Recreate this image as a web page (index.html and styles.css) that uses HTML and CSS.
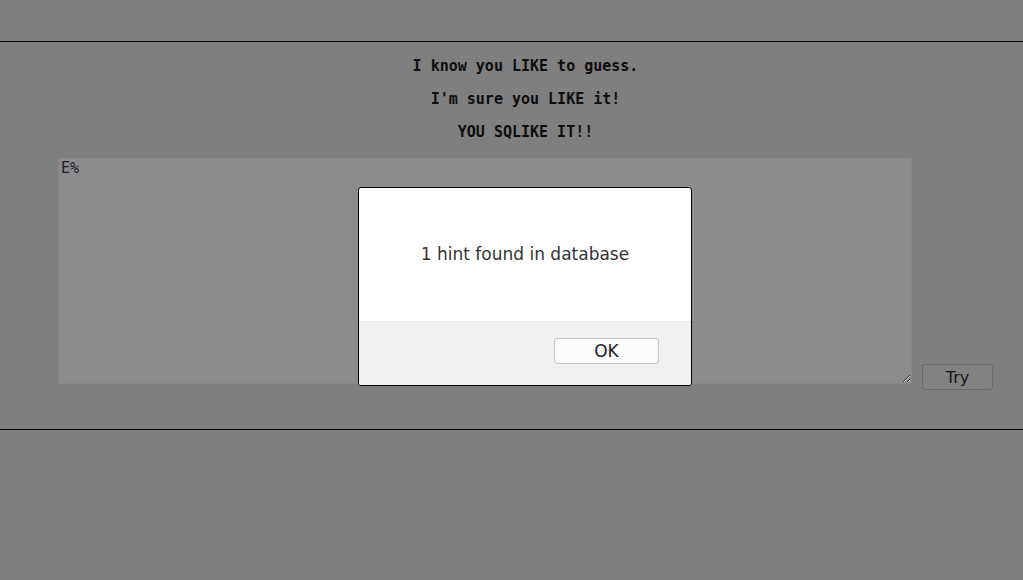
FILE: index.html
```html
<!DOCTYPE html>
<html>
<head>
<meta charset="utf-8">
<link rel="stylesheet" href="styles.css">
</head>
<body>
<div class="top"></div>
<hr class="rule">
<main class="wrap">
  <div class="line">I know you LIKE to guess.</div>
  <div class="line">I'm sure you LIKE it!</div>
  <div class="line">YOU SQLIKE IT!!</div>
  <form class="form">
    <textarea class="input">E%</textarea>
    <button type="button" class="try">Try</button>
  </form>
</main>
<hr class="rule">
<div class="dialog">
  <div class="dialog-body">1 hint found in database</div>
  <div class="dialog-foot"><button type="button" class="ok">OK</button></div>
</div>
</body>
</html>
```
FILE: styles.css
```css
html, body {
  margin: 0;
  padding: 0;
  background: #7f7f7f;
  height: 100%;
}
.top {
  height: 41px;
}
.rule {
  margin: 0;
  border: 0;
  height: 1px;
  background: #000;
}
.wrap {
  margin-left: 58px;
  width: 935px;
  padding-top: 8px;
  padding-bottom: 45px;
}
.line {
  height: 33px;
  line-height: 33px;
  text-align: center;
  font-family: "DejaVu Sans Mono", monospace;
  font-weight: bold;
  font-size: 15px;
  color: #0d0d0d;
}
.form {
  margin-top: 9px;
  display: flex;
  align-items: flex-end;
  gap: 10px;
}
.input {
  box-sizing: border-box;
  width: 854px;
  height: 226px;
  margin: 0;
  padding: 1px 2px;
  background: #8c8c8c;
  border: 1px solid #878787;
  font-family: "DejaVu Sans Mono", monospace;
  font-size: 15px;
  line-height: 17px;
  color: #1e1e28;
  outline: none;
}
.try {
  box-sizing: border-box;
  width: 71px;
  height: 26px;
  margin: 0 0 -6px 0;
  background: #828282;
  border: 1px solid #6b6b6b;
  border-radius: 3px;
  font-family: "DejaVu Sans", sans-serif;
  font-size: 16px;
  color: #141414;
  padding: 0;
}
.dialog {
  position: absolute;
  left: 358px;
  top: 187px;
  width: 332px;
  height: 197px;
  border: 1px solid #000;
  border-radius: 3px;
  background: #fff;
  overflow: hidden;
  display: flex;
  flex-direction: column;
}
.dialog-body {
  height: 133px;
  display: flex;
  align-items: center;
  justify-content: center;
  font-family: "DejaVu Sans", sans-serif;
  font-size: 17px;
  color: #333;
  padding-bottom: 1px;
  box-sizing: border-box;
}
.dialog-foot {
  flex: 1;
  background: #f1f1f1;
  border-top: 1px solid #e6e6e6;
  display: flex;
  justify-content: flex-end;
  align-items: flex-start;
  padding: 16px 32px 0 0;
}
.ok {
  box-sizing: border-box;
  width: 105px;
  height: 26px;
  margin: 0;
  padding: 0;
  background: #fbfbfb;
  border: 1px solid #c6c6c6;
  border-radius: 3px;
  font-family: "DejaVu Sans", sans-serif;
  font-size: 17px;
  color: #222;
}
```
